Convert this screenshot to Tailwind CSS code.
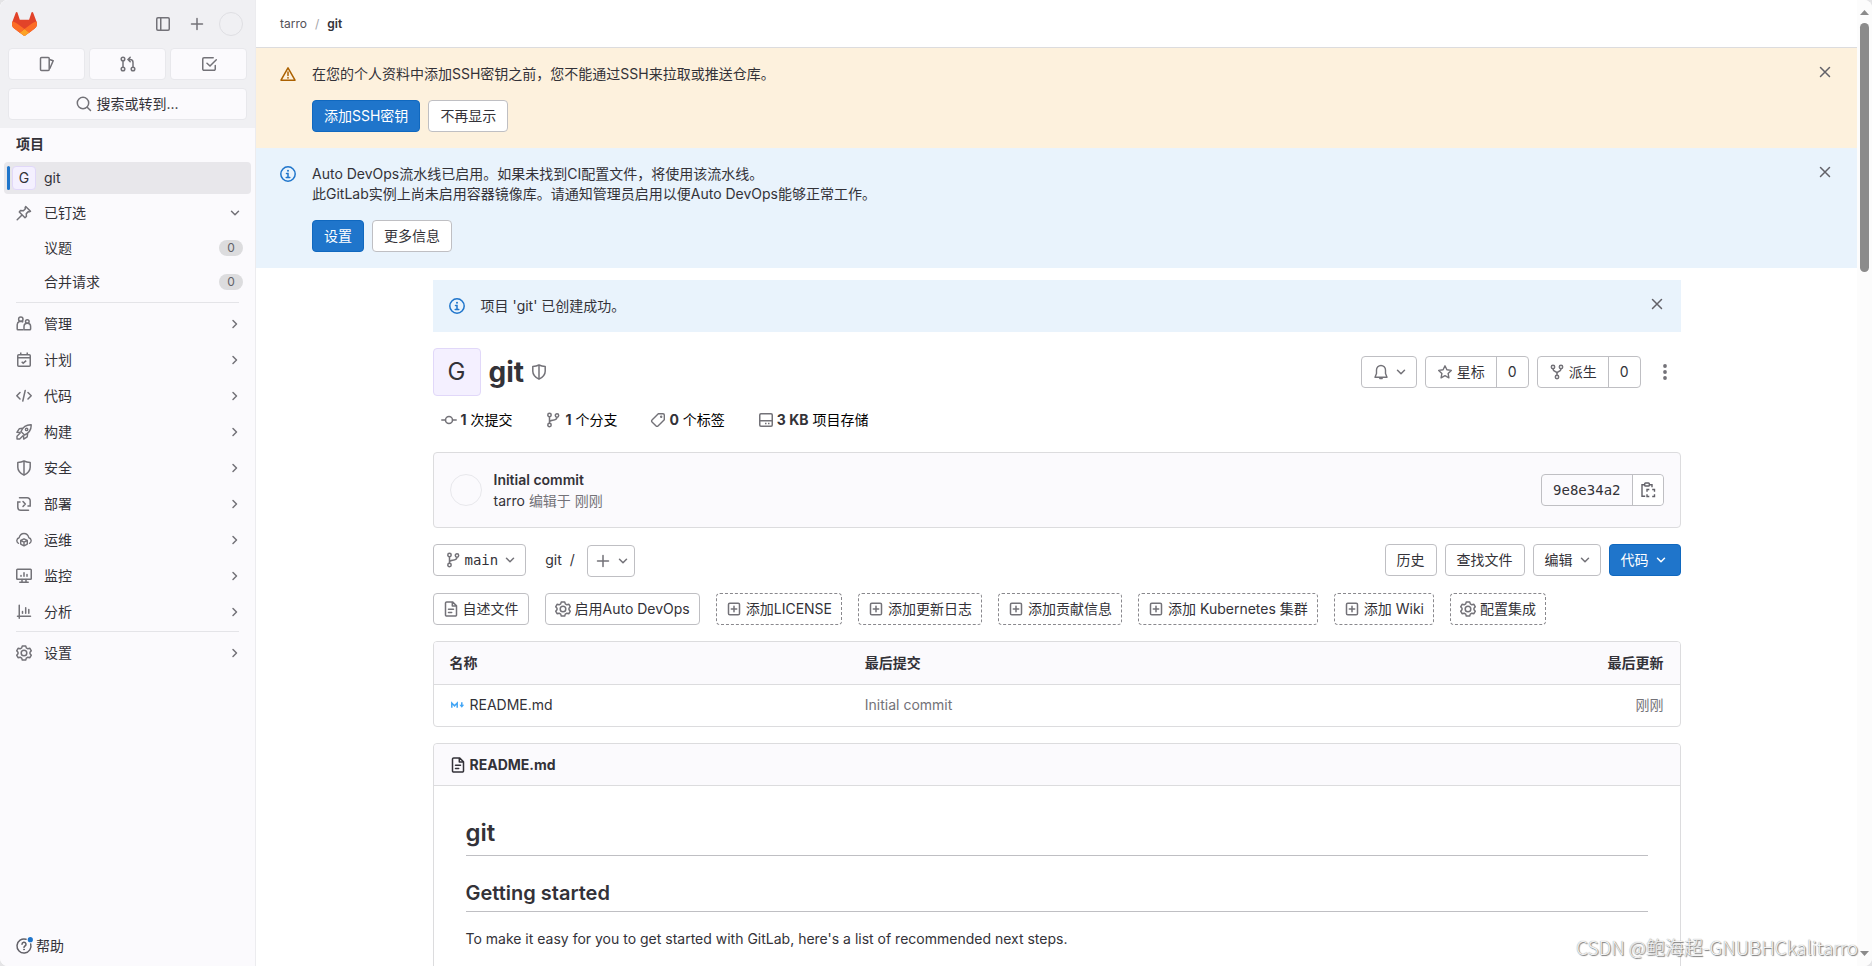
<!DOCTYPE html>
<html lang="zh-CN">
<head>
<meta charset="utf-8">
<title>tarro / git · GitLab</title>
<script src="https://cdn.jsdelivr.net/npm/@tailwindcss/browser@4"></script>
</head>
<body class="bg-[#e4e4e6] font-['Inter','Noto_Sans_CJK_SC',sans-serif] text-sm leading-5 text-[#333238]">

<svg class="hidden" aria-hidden="true">
  <defs>
    <g id="chev-r"><path d="m6 4.500 3.500 3.500L6 11.500" fill="none" stroke="currentColor" stroke-width="1.500" stroke-linecap="round" stroke-linejoin="round"/></g>
    <g id="chev-d"><path d="M4.500 6.250 8 9.750l3.500-3.500" fill="none" stroke="currentColor" stroke-width="1.500" stroke-linecap="round" stroke-linejoin="round"/></g>
    <g id="close"><path d="m3.500 3.500 9 9m0-9-9 9" fill="none" stroke="currentColor" stroke-width="1.500" stroke-linecap="round"/></g>
    <g id="plus"><path d="M8 2.500v11M2.500 8h11" fill="none" stroke="currentColor" stroke-width="1.500" stroke-linecap="round"/></g>
    <g id="info"><circle cx="8" cy="8" r="7.200" fill="none" stroke="currentColor" stroke-width="1.500"/><path d="M6.500 7.500H8v4M6.200 11.500h3.600" fill="none" stroke="currentColor" stroke-width="1.500" stroke-linecap="round"/><circle cx="8" cy="4.800" r="1" fill="currentColor"/></g>
    <g id="warn"><path d="M8 1.800 1 14.200h14z" fill="none" stroke="currentColor" stroke-width="1.500" stroke-linejoin="round"/><path d="M8 6v3.500" fill="none" stroke="currentColor" stroke-width="1.500" stroke-linecap="round"/><circle cx="8" cy="11.800" r=".9" fill="currentColor"/></g>
    <g id="shield" fill="none" stroke="currentColor" stroke-width="1.500"><path d="M8 1c2 1 4 1.400 6.200 1.500v4.700c0 3.600-2.400 6-6.200 8-3.800-2-6.200-4.400-6.200-8V2.500C4 2.400 6 2 8 1Z" stroke-linejoin="round"/><path d="M8 1v14"/></g>
    <g id="branch" fill="none" stroke="currentColor" stroke-width="1.500"><circle cx="4.500" cy="3" r="1.700"/><circle cx="4.500" cy="13" r="1.700"/><circle cx="12" cy="3.500" r="1.700"/><path d="M4.500 4.700v6.600M4.500 10C4.500 7 12 9.500 12 5.200"/></g>
    <g id="merge" fill="none" stroke="currentColor" stroke-width="1.500" stroke-linecap="round"><circle cx="3" cy="3" r="1.800"/><circle cx="3" cy="13" r="1.800"/><circle cx="13" cy="13" r="1.800"/><path d="M3 4.800v6.400M13 11.200V6.500c0-2-1-3-3-3H8.500M10.200 1.200 8 3.500l2.200 2.300"/></g>
    <g id="fork" fill="none" stroke="currentColor" stroke-width="1.500"><circle cx="4" cy="3" r="1.700"/><circle cx="12" cy="3" r="1.700"/><circle cx="8" cy="13" r="1.700"/><path d="M4 4.800c0 3.500 4 2 4 4.700v1.700M12 4.800c0 3.500-4 2-4 4.700"/></g>
    <g id="gear" fill="none" stroke="currentColor" stroke-width="1.500" stroke-linejoin="round"><path d="M6.300.9h3.400l.6 2 1.600.9 2-.5 1.400 2.500L14 7.200v1.600l1.300 1.400-1.400 2.500-2-.5-1.600.9-.6 2H6.300l-.6-2-1.600-.9-2 .5-1.400-2.500L2 8.800V7.200L.7 5.800l1.400-2.500 2 .5 1.600-.9z"/><circle cx="8" cy="8" r="2.800"/></g>
    <g id="doc" fill="none" stroke="currentColor" stroke-width="1.500" stroke-linejoin="round"><path d="M9.500.9H3.700a1.200 1.200 0 0 0-1.200 1.200v11.800a1.200 1.200 0 0 0 1.200 1.200h8.600a1.200 1.200 0 0 0 1.200-1.200V4.800zM9.300 1v4h4"/><path d="M5.500 8.300h5M5.500 11.500h3.200" stroke-linecap="round"/></g>
    <g id="addbox" fill="none" stroke="currentColor" stroke-width="1.500"><rect x="2.500" y="2.200" width="11" height="11.600" rx="1.300"/><path d="M8 5.300v5.400M5.300 8h5.400" stroke-linecap="round"/></g>
  </defs>
</svg>

<div class="relative flex h-screen overflow-hidden rounded-lg bg-white">

  <!-- Sidebar -->
  <aside class="flex w-64 shrink-0 flex-col border-r border-[#ececef] bg-[#fbfafd]">
    <div class="flex h-32 shrink-0 flex-col gap-2 bg-[#f0f0f3] px-2 pt-2 text-[#737278]">
      <div class="flex h-8 items-center pr-1 pl-1">
        <a href="#" aria-label="GitLab"><svg class="h-6 w-[25px]" viewBox="0 0 25 24"><path d="m24.507 9.500-.034-.090L21.082.562a.896.896 0 0 0-1.694.091l-2.290 7.010H7.825L5.535.653a.898.898 0 0 0-1.694-.090L.451 9.411.416 9.500a6.297 6.297 0 0 0 2.090 7.278l.012.010.03.022 5.160 3.867 2.560 1.935 1.554 1.176a1.051 1.051 0 0 0 1.268 0l1.555-1.176 2.560-1.935 5.197-3.890.014-.010A6.297 6.297 0 0 0 24.507 9.500Z" fill="#E24329"/><path d="m24.507 9.500-.034-.090a11.440 11.440 0 0 0-4.560 2.051l-7.447 5.632 4.742 3.584 5.197-3.890.014-.010A6.297 6.297 0 0 0 24.507 9.500Z" fill="#FC6D26"/><path d="m7.707 20.677 2.560 1.935 1.555 1.176a1.051 1.051 0 0 0 1.268 0l1.555-1.176 2.560-1.935-4.743-3.584-4.755 3.584Z" fill="#FCA326"/><path d="M5.010 11.461a11.430 11.430 0 0 0-4.560-2.050L.416 9.500a6.297 6.297 0 0 0 2.090 7.278l.012.010.030.022 5.160 3.867 4.745-3.584-7.444-5.632Z" fill="#FC6D26"/></svg></a>
        <div class="grow"></div>
        <button class="mr-[2px] p-2" aria-label="侧边栏"><svg class="size-4" viewBox="0 0 16 16" fill="none" stroke="currentColor" stroke-width="1.500"><rect x="1.750" y="1.750" width="12.500" height="12.500" rx="1.200"/><path d="M5.750 2v12"/></svg></button>
        <button class="mr-[6px] p-2" aria-label="新建"><svg class="size-4" viewBox="0 0 16 16"><use href="#plus"/></svg></button>
        <button class="size-6 rounded-full border border-[#dfdfe3]" aria-label="用户"></button>
      </div>
      <div class="grid grid-cols-3 gap-1">
        <button class="flex h-8 items-center justify-center rounded border border-[#e8e8ec] bg-[#fbfafd]" aria-label="议题"><svg class="size-4" viewBox="0 0 16 16" fill="none" stroke="currentColor" stroke-width="1.500" stroke-linejoin="round"><rect x="1.500" y="1.500" width="8.700" height="13" rx="1"/><path d="m10.500 3.500 3.700 1.300-3.500 8"/></svg></button>
        <button class="flex h-8 items-center justify-center rounded border border-[#e8e8ec] bg-[#fbfafd]" aria-label="合并请求"><svg class="size-4" viewBox="0 0 16 16"><use href="#merge"/></svg></button>
        <button class="flex h-8 items-center justify-center rounded border border-[#e8e8ec] bg-[#fbfafd]" aria-label="待办"><svg class="size-4" viewBox="0 0 16 16" fill="none" stroke="currentColor" stroke-width="1.500" stroke-linecap="round"><path d="M12.200 1.750H3A1.250 1.250 0 0 0 1.750 3v10A1.250 1.250 0 0 0 3 14.250h10A1.250 1.250 0 0 0 14.250 13V9.500M6 7.200 9 10l6.300-6.300"/></svg></button>
      </div>
      <button class="flex h-8 items-center justify-center gap-1 rounded border border-[#e8e8ec] bg-[#fbfafd]"><svg class="size-4" viewBox="0 0 16 16" fill="none" stroke="currentColor" stroke-width="1.500" stroke-linecap="round"><circle cx="7" cy="7" r="5.700"/><path d="m11.200 11.200 3.300 3.300"/></svg><span class="text-[#333238]">搜索或转到...</span></button>
    </div>

    <nav class="flex grow flex-col px-1">
      <div class="mb-[2px] flex h-8 items-center px-3 font-bold">项目</div>
      <a href="#" class="flex h-8 items-center rounded bg-[#e8e7eb] pl-[3px]"><span class="mr-[2px] h-6 w-[3px] rounded bg-[#1f75cb]"></span><span class="mr-2 flex size-6 items-center justify-center rounded border border-[#e1d8f9] bg-[#f4f0ff]">G</span>git</a>
      <button class="mt-[1px] flex h-9 items-center gap-3 pr-2 pl-3"><svg class="size-4 text-[#737278]" viewBox="0 0 16 16" fill="none" stroke="currentColor" stroke-width="1.500" stroke-linejoin="round" stroke-linecap="round"><path d="m9.700 1.500 4.800 4.800-1.400.600-.800-.300-2 2 .100 2.900-1.400 1.200L3.300 7l1.200-1.400 2.900.100 2-2-.300-.800zM6 10l-4.800 4.800"/></svg><span>已钉选</span><svg class="ml-auto size-4 text-[#737278]" viewBox="0 0 16 16"><use href="#chev-d"/></svg></button>
      <a href="#" class="flex h-[34px] items-center pr-2 pl-10">议题<span class="ml-auto flex h-4 w-6 items-center justify-center rounded-full bg-[#dcdcde] text-xs text-[#626168]">0</span></a>
      <a href="#" class="flex h-[34px] items-center pr-2 pl-10">合并请求<span class="ml-auto flex h-4 w-6 items-center justify-center rounded-full bg-[#dcdcde] text-xs text-[#626168]">0</span></a>
      <hr class="mx-3 my-[3px] border-[#e4e4e8]">
      <button class="flex h-9 items-center gap-3 pr-2 pl-3"><svg class="size-4 text-[#737278]" viewBox="0 0 16 16" fill="none" stroke="currentColor" stroke-width="1.500" stroke-linejoin="round"><circle cx="4.800" cy="3.300" r="2.200"/><path d="M7.500 13.800h-5.500a.8.800 0 0 1-.8-.8V8.700a3.500 3.500 0 0 1 6-2.400"/><circle cx="11.300" cy="5.500" r="1.800"/><path d="M8 13.800V10.500a3.300 3.300 0 0 1 6.600 0v2.500a.8.800 0 0 1-.8.800z"/></svg><span>管理</span><svg class="ml-auto size-4 text-[#737278]" viewBox="0 0 16 16"><use href="#chev-r"/></svg></button>
      <button class="flex h-9 items-center gap-3 pr-2 pl-3"><svg class="size-4 text-[#737278]" viewBox="0 0 16 16" fill="none" stroke="currentColor" stroke-width="1.500"><rect x="1.750" y="2.750" width="12.500" height="11.500" rx="1"/><path d="M2 5.750h12M4.750.5v2M11.250.5v2M5.700 9.700l1.500 1.500 3-2.500"/></svg><span>计划</span><svg class="ml-auto size-4 text-[#737278]" viewBox="0 0 16 16"><use href="#chev-r"/></svg></button>
      <button class="flex h-9 items-center gap-3 pr-2 pl-3"><svg class="size-4 text-[#737278]" viewBox="0 0 16 16" fill="none" stroke="currentColor" stroke-width="1.500" stroke-linecap="round" stroke-linejoin="round"><path d="M4 4.500.8 7.700 4 11M12 4.500l3.200 3.200L12 11M9.200 2.500l-2.400 10.500"/></svg><span>代码</span><svg class="ml-auto size-4 text-[#737278]" viewBox="0 0 16 16"><use href="#chev-r"/></svg></button>
      <button class="flex h-9 items-center gap-3 pr-2 pl-3"><svg class="size-4 text-[#737278]" viewBox="0 0 16 16" fill="none" stroke="currentColor" stroke-width="1.400" stroke-linejoin="round"><path d="M15.200.8C10.500.6 7 3 5 7.500l3.500 3.500c4.500-2 6.900-5.500 6.700-10.200ZM6.700 4.300 3.200 4.800.9 8.300l3.800.2M11.700 9.300l-.5 3.500-3.500 2.300-.2-3.800M4.500 8.800 1 12.300V15h2.700l3.500-3.500"/><circle cx="10.600" cy="5.400" r="1.200"/></svg><span>构建</span><svg class="ml-auto size-4 text-[#737278]" viewBox="0 0 16 16"><use href="#chev-r"/></svg></button>
      <button class="flex h-9 items-center gap-3 pr-2 pl-3"><svg class="size-4 text-[#737278]" viewBox="0 0 16 16"><use href="#shield"/></svg><span>安全</span><svg class="ml-auto size-4 text-[#737278]" viewBox="0 0 16 16"><use href="#chev-r"/></svg></button>
      <button class="flex h-9 items-center gap-3 pr-2 pl-3"><svg class="size-4 text-[#737278]" viewBox="0 0 16 16" fill="none" stroke="currentColor" stroke-width="1.500" stroke-linecap="round"><path d="M3.500 1.750h7.700a3 3 0 0 1 3 3V10H12M12.500 14.250H4.800a3 3 0 0 1-3-3V6H4"/><path d="M7 5.500 9.300 8 7 10.500" stroke-linejoin="round"/></svg><span>部署</span><svg class="ml-auto size-4 text-[#737278]" viewBox="0 0 16 16"><use href="#chev-r"/></svg></button>
      <button class="flex h-9 items-center gap-3 pr-2 pl-3"><svg class="size-4 text-[#737278]" viewBox="0 0 16 16" fill="none" stroke="currentColor" stroke-width="1.400" stroke-linecap="round" stroke-linejoin="round"><path d="M2.500 11.300A3 3 0 0 1 3.200 5.700C3.800 3 5.800 1.500 8 1.500s4.200 1.500 4.800 4.200a3 3 0 0 1 .7 5.600"/><path d="m8 6.800 3.300 1.600v3.700L8 13.900l-3.300-1.800V8.400zM4.900 8.600 8 10.200l3.100-1.600M8 10.200v3.500"/></svg><span>运维</span><svg class="ml-auto size-4 text-[#737278]" viewBox="0 0 16 16"><use href="#chev-r"/></svg></button>
      <button class="flex h-9 items-center gap-3 pr-2 pl-3"><svg class="size-4 text-[#737278]" viewBox="0 0 16 16" fill="none" stroke="currentColor" stroke-width="1.500" stroke-linecap="round"><rect x=".75" y="1.250" width="14.500" height="10" rx=".8"/><path d="M6 11.500v2.500M10 11.500v2.500M3.800 14.250h8.400M5 7.500V8.300M8 4.800v3.500M11 6.500v1.800"/></svg><span>监控</span><svg class="ml-auto size-4 text-[#737278]" viewBox="0 0 16 16"><use href="#chev-r"/></svg></button>
      <button class="flex h-9 items-center gap-3 pr-2 pl-3"><svg class="size-4 text-[#737278]" viewBox="0 0 16 16" fill="none" stroke="currentColor" stroke-width="1.500" stroke-linecap="round"><path d="M3.250 1.200v13M1.500 12.250h13M6.500 7.500V9.300M9.700 3.700v5.600M12.800 5.500v3.800"/></svg><span>分析</span><svg class="ml-auto size-4 text-[#737278]" viewBox="0 0 16 16"><use href="#chev-r"/></svg></button>
      <hr class="mx-3 mt-[1px] mb-[3px] border-[#e4e4e8]">
      <button class="flex h-9 items-center gap-3 pr-2 pl-3"><svg class="size-4 text-[#737278]" viewBox="0 0 16 16"><use href="#gear"/></svg><span>设置</span><svg class="ml-auto size-4 text-[#737278]" viewBox="0 0 16 16"><use href="#chev-r"/></svg></button>
      <button class="mt-auto mb-1 flex h-8 items-center gap-1 px-3"><svg class="size-4 overflow-visible text-[#626168]" viewBox="0 0 16 16" fill="none" stroke="currentColor" stroke-width="1.500" stroke-linecap="round"><path d="M10 1.300a7 7 0 1 0 4.700 4.700"/><path d="M6 6.300a2 2 0 1 1 3 1.700c-.7.400-1 .7-1 1.400"/><circle cx="8" cy="11.600" r=".5" fill="currentColor" stroke-width=".8"/><circle cx="14.300" cy="1.700" r="2.600" fill="#1f75cb" stroke="none"/></svg><span>帮助</span></button>
    </nav>
  </aside>

  <!-- Main column -->
  <main class="flex min-w-0 grow flex-col overflow-hidden">
    <nav class="flex h-12 shrink-0 items-center gap-2 border-b border-[#dcdcde] px-6 text-xs" aria-label="breadcrumb"><a href="#" class="text-[#535158]">tarro</a><span class="text-[#a4a3a8]">/</span><a href="#" class="font-semibold">git</a></nav>

    <section class="flex shrink-0 gap-4 bg-[#fdf1dd] px-6 py-4">
      <svg class="mt-[2px] size-4 shrink-0 text-[#ab6100]" viewBox="0 0 16 16"><use href="#warn"/></svg>
      <div class="grow">
        <p>在您的个人资料中添加SSH密钥之前，您不能通过SSH来拉取或推送仓库。</p>
        <div class="mt-4 flex gap-2">
          <a href="#" class="flex h-8 items-center rounded border border-[#1068bf] bg-[#1f75cb] px-[11px] text-white">添加SSH密钥</a>
          <button class="h-8 rounded border border-[#bfbfc3] bg-white px-[11px]">不再显示</button>
        </div>
      </div>
      <button class="size-4 text-[#626168]" aria-label="关闭"><svg class="size-4" viewBox="0 0 16 16"><use href="#close"/></svg></button>
    </section>

    <section class="flex shrink-0 gap-4 bg-[#e9f3fc] px-6 py-4">
      <svg class="mt-[2px] size-4 shrink-0 text-[#1f75cb]" viewBox="0 0 16 16"><use href="#info"/></svg>
      <div class="grow">
        <p>Auto DevOps流水线已启用。如果未找到CI配置文件，将使用该流水线。<br>此GitLab实例上尚未启用容器镜像库。请通知管理员启用以便Auto DevOps能够正常工作。</p>
        <div class="mt-4 flex gap-2">
          <a href="#" class="flex h-8 items-center rounded border border-[#1068bf] bg-[#1f75cb] px-[11px] text-white">设置</a>
          <a href="#" class="flex h-8 items-center rounded border border-[#bfbfc3] bg-white px-[11px]">更多信息</a>
        </div>
      </div>
      <button class="size-4 text-[#626168]" aria-label="关闭"><svg class="size-4" viewBox="0 0 16 16"><use href="#close"/></svg></button>
    </section>

    <div class="mx-auto w-full max-w-[1280px] px-4 pt-3">
      <div class="flex gap-4 bg-[#e9f3fc] p-4">
        <svg class="mt-[2px] size-4 shrink-0 text-[#1f75cb]" viewBox="0 0 16 16"><use href="#info"/></svg>
        <p class="grow">项目 'git' 已创建成功。</p>
        <button class="size-4 text-[#626168]" aria-label="关闭"><svg class="size-4" viewBox="0 0 16 16"><use href="#close"/></svg></button>
      </div>

      <header class="mt-4 flex h-12 items-center">
        <span class="mr-2 flex size-12 items-center justify-center rounded border border-[#e1d8f9] bg-[#f4f0ff] text-2xl">G</span>
        <h1 class="mr-[7px] text-[28px] leading-9 font-bold">git</h1>
        <svg class="size-4 text-[#737278]" viewBox="0 0 16 16"><use href="#shield"/></svg>
        <div class="ml-auto flex items-center gap-2">
          <button class="flex h-8 items-center gap-1 rounded border border-[#bfbfc3] pr-[7px] pl-[11px] text-[#737278]" aria-label="通知"><svg class="size-4" viewBox="0 0 16 16" fill="none" stroke="currentColor" stroke-width="1.400" stroke-linejoin="round"><path d="M8 1.500A4.500 4.500 0 0 0 3.500 6v3.500L2 13.300h12l-1.500-3.800V6A4.500 4.500 0 0 0 8 1.500Z"/><path d="M6.800 14.500h2.400" stroke-linecap="round"/></svg><svg class="size-4" viewBox="0 0 16 16"><use href="#chev-d"/></svg></button>
          <div class="flex h-8 rounded border border-[#bfbfc3]">
            <button class="flex items-center gap-1 px-[11px]"><svg class="size-4 text-[#737278]" viewBox="0 0 16 16" fill="none" stroke="currentColor" stroke-width="1.400" stroke-linejoin="round"><path d="m8 1.800 1.900 4 4.400.600-3.200 3 .800 4.400L8 11.700l-3.900 2.100.800-4.400-3.200-3 4.400-.600z"/></svg>星标</button>
            <a href="#" class="flex items-center border-l border-[#bfbfc3] px-[11px]">0</a>
          </div>
          <div class="flex h-8 rounded border border-[#bfbfc3]">
            <button class="flex items-center gap-1 px-[11px]"><svg class="size-4 text-[#737278]" viewBox="0 0 16 16"><use href="#fork"/></svg>派生</button>
            <a href="#" class="flex items-center border-l border-[#bfbfc3] px-[11px]">0</a>
          </div>
          <button class="flex size-8 items-center justify-center text-[#737278]" aria-label="更多操作"><svg class="size-4" viewBox="0 0 16 16" fill="currentColor"><circle cx="8" cy="2" r="1.900"/><circle cx="8" cy="8" r="1.900"/><circle cx="8" cy="14" r="1.900"/></svg></button>
        </div>
      </header>

      <nav class="mt-2 flex h-8 items-center gap-[33px] pl-2 text-black">
        <a href="#" class="flex items-center gap-1"><svg class="size-4 text-[#737278]" viewBox="0 0 16 16" fill="none" stroke="currentColor" stroke-width="1.500" stroke-linecap="round"><circle cx="8" cy="8" r="3.500"/><path d="M.8 8h3.700M11.500 8h3.700"/></svg><span><b class="font-bold text-[#333238]">1</b> 次提交</span></a>
        <a href="#" class="flex items-center gap-1"><svg class="size-4 text-[#737278]" viewBox="0 0 16 16"><use href="#branch"/></svg><span><b class="font-bold text-[#333238]">1</b> 个分支</span></a>
        <a href="#" class="flex items-center gap-[3px]"><svg class="size-4 text-[#737278]" viewBox="0 0 16 16" fill="none" stroke="currentColor" stroke-width="1.400" stroke-linejoin="round"><path d="M8.300 1.700h4.700a1.300 1.300 0 0 1 1.300 1.300v4.700L8 14a1.300 1.300 0 0 1-1.900 0L2 9.900A1.300 1.300 0 0 1 2 8z"/><circle cx="11.200" cy="4.800" r=".5" fill="currentColor"/></svg><span><b class="font-bold text-[#333238]">0</b> 个标签</span></a>
        <a href="#" class="flex items-center gap-[3px]"><svg class="size-4 text-[#737278]" viewBox="0 0 16 16" fill="none" stroke="currentColor" stroke-width="1.500"><rect x="1.750" y="1.750" width="12.500" height="12.500" rx="1.200"/><path d="M2 8.750h12M7 11.500h1.500M10 11.500h1.500"/></svg><span><b class="font-bold text-[#333238]">3 KB</b> 项目存储</span></a>
      </nav>

      <section class="mt-4 flex h-[76px] items-center rounded border border-[#dcdcde] bg-[#fbfafd] px-4">
        <span class="mr-3 size-8 rounded-full border border-[#e8e8ec]"></span>
        <div class="grow leading-[21px]"><a href="#" class="font-semibold">Initial commit</a><p class="text-[#737278]"><a href="#" class="text-[#333238]">tarro</a> 编辑于 刚刚</p></div>
        <div class="flex h-8 rounded border border-[#bfbfc3]">
          <span class="flex items-center px-[11px] font-['DejaVu_Sans_Mono',monospace] text-[#333238]">9e8e34a2</span>
          <button class="flex items-center rounded-r border-l border-[#bfbfc3] bg-white px-[7px] text-[#626168]" aria-label="复制"><svg class="size-4" viewBox="0 0 16 16" fill="none" stroke="currentColor" stroke-width="1.400"><path d="M4.500 2.700H2v11.600h3.200M9.500 2.700H12v2.500"/><rect x="4.700" y="1" width="4.600" height="3" rx=".8"/><path d="M9.300 7.500H7v2.300M12.200 7.500h2.300v2.300M7 12.200v2.300h2.300M14.500 12.200v2.300h-2.300"/></svg></button>
        </div>
      </section>

      <div class="mt-4 flex h-8 items-center gap-2">
        <button class="flex h-8 items-center gap-1 rounded border border-[#bfbfc3] pr-[7px] pl-[11px] font-['DejaVu_Sans_Mono',monospace]"><svg class="size-4 text-[#737278]" viewBox="0 0 16 16"><use href="#branch"/></svg>main<svg class="size-4 text-[#737278]" viewBox="0 0 16 16"><use href="#chev-d"/></svg></button>
        <a href="#" class="ml-[11px]">git</a><span>/</span>
        <button class="mt-[2px] ml-1 flex h-8 items-center gap-1 rounded border border-[#bfbfc3] pr-[3px] pl-[7px] text-[#737278]" aria-label="添加"><svg class="size-4" viewBox="0 0 16 16"><use href="#plus"/></svg><svg class="size-4" viewBox="0 0 16 16"><use href="#chev-d"/></svg></button>
        <a href="#" class="ml-auto flex h-8 items-center rounded border border-[#bfbfc3] px-[11px]">历史</a>
        <a href="#" class="flex h-8 items-center rounded border border-[#bfbfc3] px-[11px]">查找文件</a>
        <button class="flex h-8 items-center gap-1 rounded border border-[#bfbfc3] pr-[7px] pl-[11px]">编辑<svg class="size-4 text-[#737278]" viewBox="0 0 16 16"><use href="#chev-d"/></svg></button>
        <button class="flex h-8 items-center gap-1 rounded border border-[#1068bf] bg-[#1f75cb] px-[11px] text-white">代码<svg class="size-4" viewBox="0 0 16 16"><use href="#chev-d"/></svg></button>
      </div>

      <div class="mt-[17px] flex flex-wrap gap-4">
        <a href="#" class="flex h-8 items-center gap-1 rounded border border-[#bfbfc3] px-[9px]"><svg class="size-4 text-[#737278]" viewBox="0 0 16 16"><use href="#doc"/></svg>自述文件</a>
        <a href="#" class="flex h-8 items-center gap-1 rounded border border-[#bfbfc3] px-[9px]"><svg class="size-4 text-[#737278]" viewBox="0 0 16 16"><use href="#gear"/></svg>启用Auto DevOps</a>
        <a href="#" class="flex h-8 items-center gap-1 rounded border border-dashed border-[#89888d] px-[9px]"><svg class="size-4 text-[#737278]" viewBox="0 0 16 16"><use href="#addbox"/></svg>添加LICENSE</a>
        <a href="#" class="flex h-8 items-center gap-1 rounded border border-dashed border-[#89888d] px-[9px]"><svg class="size-4 text-[#737278]" viewBox="0 0 16 16"><use href="#addbox"/></svg>添加更新日志</a>
        <a href="#" class="flex h-8 items-center gap-1 rounded border border-dashed border-[#89888d] px-[9px]"><svg class="size-4 text-[#737278]" viewBox="0 0 16 16"><use href="#addbox"/></svg>添加贡献信息</a>
        <a href="#" class="flex h-8 items-center gap-1 rounded border border-dashed border-[#89888d] px-[9px]"><svg class="size-4 text-[#737278]" viewBox="0 0 16 16"><use href="#addbox"/></svg>添加 Kubernetes 集群</a>
        <a href="#" class="flex h-8 items-center gap-1 rounded border border-dashed border-[#89888d] px-[9px]"><svg class="size-4 text-[#737278]" viewBox="0 0 16 16"><use href="#addbox"/></svg>添加 Wiki</a>
        <a href="#" class="flex h-8 items-center gap-1 rounded border border-dashed border-[#89888d] px-[9px]"><svg class="size-4 text-[#737278]" viewBox="0 0 16 16"><use href="#gear"/></svg>配置集成</a>
      </div>

      <div class="mt-4 overflow-hidden rounded border border-[#dcdcde]">
        <table class="w-full table-fixed">
          <thead class="bg-[#fbfafd]"><tr class="h-[42px] border-b border-[#dcdcde]"><th class="w-1/3 px-4 text-left font-bold">名称</th><th class="px-4 text-left font-bold">最后提交</th><th class="w-1/6 px-4 text-right font-bold">最后更新</th></tr></thead>
          <tbody><tr class="h-[42px]"><td class="px-4"><a href="#" class="flex items-center gap-1"><svg class="size-4 text-[#42a5f5]" viewBox="0 0 16 16" fill="none" stroke="currentColor" stroke-width="1.500"><path d="M1.800 10.800V6L4.500 8.800 7.200 6v4.800"/><path d="M11.800 5.300v3"/><path d="M9.400 7.800h4.800l-2.400 3z" fill="currentColor" stroke="none"/></svg>README.md</a></td><td class="px-4"><a href="#" class="text-[#737278]">Initial commit</a></td><td class="px-4 text-right text-[#737278]">刚刚</td></tr></tbody>
        </table>
      </div>

      <article class="mt-4 rounded border border-[#dcdcde]">
        <div class="flex h-[42px] items-center gap-1 rounded-t border-b border-[#dcdcde] bg-[#fbfafd] px-4 font-bold"><svg class="size-4" viewBox="0 0 16 16"><use href="#doc"/></svg><a href="#">README.md</a></div>
        <div class="px-8 pt-[33px] pb-16">
          <h1 class="border-b border-[#bfbfc3] pb-2 text-2xl leading-7 font-semibold">git</h1>
          <h2 class="mt-[25px] border-b border-[#bfbfc3] pb-[6px] text-xl leading-6 font-semibold">Getting started</h2>
          <p class="mt-[15px] leading-6">To make it easy for you to get started with GitLab, here's a list of recommended next steps.</p>
        </div>
      </article>
    </div>
  </main>

  <!-- Scroll track -->
  <div class="flex w-[15px] shrink-0 flex-col items-center bg-[#fcfcfc] py-[10px]">
    <svg class="h-[5px] w-[9px]" viewBox="0 0 9 5" fill="#8b8b8b"><path d="M4.500 0 9 5H0z"/></svg>
    <div class="mt-2 h-[249px] w-[9px] rounded-full bg-[#8b8b8b]"></div>
    <svg class="mt-auto h-[5px] w-[9px]" viewBox="0 0 9 5" fill="#8b8b8b"><path d="M0 0h9L4.500 5z"/></svg>
  </div>

  <div class="absolute right-[14px] bottom-[5px] font-['Noto_Sans_CJK_SC',sans-serif] text-[19px] leading-7 font-light text-[#f4f4f4] [text-shadow:1px_1px_1px_#777,0_0_1px_#888]">CSDN @鲍海超-GNUBHCkalitarro</div>
</div>
</body>
</html>
